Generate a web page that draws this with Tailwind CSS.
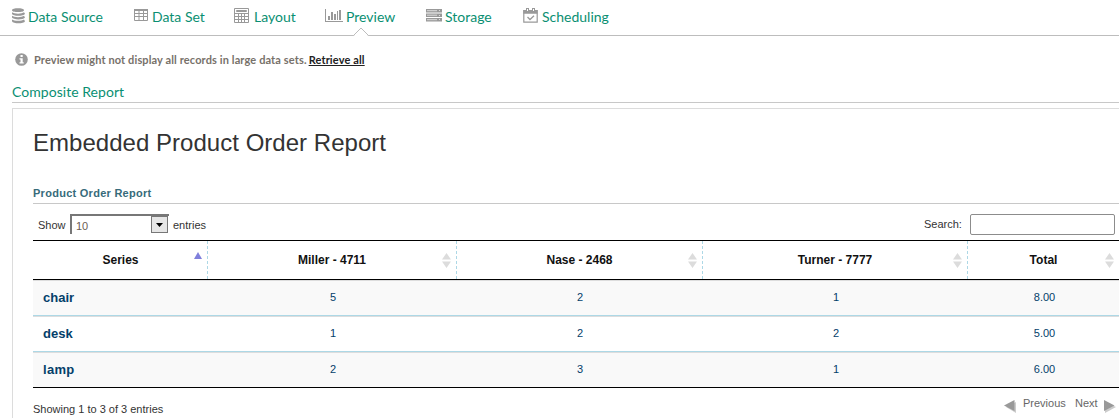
<!DOCTYPE html>
<html lang="en"><head><meta charset="utf-8"><title>Preview</title>
<script src="https://cdn.jsdelivr.net/npm/@tailwindcss/browser@4"></script></head>
<body class="w-[1119px] h-[418px] overflow-hidden bg-white font-['Liberation_Sans',sans-serif] text-[11px] text-[#333]">
<nav class="relative h-9 border-b border-[#bdbdbd] font-[Lato,sans-serif] text-[14px] leading-[18px] text-[#0a8f72] flex pt-2 pl-[11px]">
  <a class="flex w-[123px] gap-[2px]"><svg class="w-[15px] h-4" viewBox="0 0 15 16" fill="#999"><path d="M1 2.200C1 -.3 13 -.3 13 2.200S1 4.700 1 2.200ZM1 4.200c2 1.900 10 1.900 12 0l1 1.500C13 8.500 2 8.500 1 6ZM1 7.800c2 1.900 10 1.900 12 0l1 1.600C13 12 2 12 1 9.600ZM1 11.400c2 1.900 10 1.900 12 0l1 1.800C13 16 2 16 1 13.200Z"/></svg><span>Data Source</span></a>
  <a class="flex w-[100px] gap-[3px]"><svg class="w-[15px] h-4" viewBox="0 0 15 16" fill="none" stroke="#999"><path d="M.5 1.500h13v11H.5ZM.5 5.500h13M.5 8.500h13M5 2v10.500M9.500 2v10.500"/><path d="M0 2h14" stroke-width="2"/></svg><span>Data Set</span></a>
  <a class="flex w-[91px] gap-1"><svg class="w-4 h-4" viewBox="0 0 16 16" fill="none" stroke="#999"><path d="M.5.500h14v14H.5ZM.5 5.500h14M.5 8.500h14M.5 11.500h14M4.500 6v8.500M7.500 6v8.500M10.500 6v8.500"/><path d="M2.500 2.500h10v1h-10Z"/></svg><span>Layout</span></a>
  <a class="flex w-[101px] gap-[3px]"><svg class="w-[18px] h-4" viewBox="0 0 18 16" fill="#999"><path d="M0 1h1v12h17v1H0ZM3 8h2v4H3ZM6 4h2v8H6ZM9 6h2v6H9ZM12 3h1v9h-1ZM14 2h2v10h-2Z"/></svg><span>Preview</span></a>
  <a class="flex w-[97px] gap-[3px]"><svg class="w-4 h-4" viewBox="0 0 16 16"><path fill="#999" d="M0 1h16v3.500H0ZM0 5.500h16V9H0ZM0 10h16v3.500H0Z"/><path stroke="#eee" stroke-width=".8" d="M1 2.700h10M1 7.200h10M1 11.700h10"/><path fill="#ddd" d="M13 2h1v1h-1ZM13 7h1v1h-1ZM13 11h1v1h-1Z"/></svg><span>Storage</span></a>
  <a class="flex gap-1"><svg class="w-[15px] h-4" viewBox="0 0 15 16"><path fill="none" stroke="#999" stroke-width="1.200" d="M.8 2.500h13.400v11.700H.8Z"/><path fill="#999" d="M.3 2h14.200v3.700H.3ZM3 0h3v3H3ZM9 0h3v3H9Z"/><path stroke="#fff" d="M4.500 1v2M10.500 1v2"/><path fill="none" stroke="#999" stroke-width="1.300" d="m4.500 9 2.500 2.500L11 7.700"/></svg><span>Scheduling</span></a>
  <svg class="absolute left-[353px] top-[27px] w-4 h-[9px]" viewBox="0 0 16 9"><path fill="#fff" stroke="#bdbdbd" d="M.5 8.500 8 1l7.500 7.500"/><path stroke="#fff" d="M1.500 8.500h13"/></svg>
</nav>
<div class="flex h-12 pl-[15px] pt-[16px] font-[Lato,sans-serif] text-[11px] leading-[15px] font-bold">
  <svg class="w-[13px] h-[13px] mt-px mr-[6px]" viewBox="0 0 13 13"><circle cx="6.500" cy="6.500" r="6.300" fill="#999"/><path fill="#fff" d="M5.500 2h2.200v2H5.500ZM4.500 5.200h3.200v4h1v1.300H4.500V9.200h1V6.400h-1Z"/></svg>
  <span class="text-[#77716a] tracking-[0.12px]">Preview might not display all records in large data sets.</span><a class="ml-[2px] text-[#222] underline tracking-[0.13px]">Retrieve all</a>
</div>
<h2 class="ml-3 h-[19px] border-b border-[#c8c8c8] font-[Lato,sans-serif] text-[14px] leading-4 text-[#0a8f72] tracking-[0.04px]">Composite Report</h2>
<main class="ml-3 mt-[5px] h-[312px] border-l border-t border-[#dcdcdc] pl-5">
  <h1 class="h-[75px] pt-5 text-[24px] leading-7 tracking-[0.03px]">Embedded Product Order Report</h1>
  <h3 class="h-5 border-b border-[#c8c8c8] text-[11px] leading-[18px] font-bold text-[#376b7a] tracking-[0.27px]">Product Order Report</h3>
  <div class="flex h-9 justify-between pt-[9px] pr-[4px] pl-[5px]">
    <div class="flex leading-[24px]"><span class="w-8">Show</span>
      <div class="mt-px flex h-[20px] w-[99px] border-t-2 border-l-2 border-[#777] pl-1 leading-[20px] text-[#6b5c54]"><span class="grow">10</span><span class="mr-px flex h-[17px] w-[17px] items-center justify-center border border-[#777] bg-[#e6e6e6]"><svg class="h-1 w-[7px]" viewBox="0 0 7 4"><path d="M0 0h7L3.500 4Z"/></svg></span></div>
      <span class="ml-[4px]">entries</span></div>
    <div class="flex leading-[22px]"><span class="w-[46px]">Search:</span><span class="mt-px h-[21px] w-[145px] rounded-[2px] border border-[#8c8c8c] bg-white"></span></div>
  </div>
  <div class="grid grid-cols-[175px_249px_246px_265px_151px] text-center">
    <div class="col-span-5 grid grid-cols-subgrid h-10 border-y border-black text-[12px] leading-[38px] font-bold text-[#111]">
      <div class="relative border-r border-dashed border-[#add8e6] pl-px">Series<svg class="absolute right-[5px] top-[11px] h-[7px] w-2" viewBox="0 0 8 7"><path fill="#8080dc" d="M4 0 8 7H0Z"/></svg></div>
      <div class="relative border-r border-dashed border-[#add8e6]">Miller - 4711<svg class="absolute right-[5px] top-3 h-[15px] w-[9px]" viewBox="0 0 9 15"><path fill="#dcdcdc" d="M4.500 0 9 6.500H0ZM0 8.500h9L4.500 15Z"/></svg></div>
      <div class="relative border-r border-dashed border-[#add8e6]">Nase - 2468<svg class="absolute right-[5px] top-3 h-[15px] w-[9px]" viewBox="0 0 9 15"><path fill="#dcdcdc" d="M4.500 0 9 6.500H0ZM0 8.500h9L4.500 15Z"/></svg></div>
      <div class="relative border-r border-dashed border-[#add8e6]">Turner - 7777<svg class="absolute right-[5px] top-3 h-[15px] w-[9px]" viewBox="0 0 9 15"><path fill="#dcdcdc" d="M4.500 0 9 6.500H0ZM0 8.500h9L4.500 15Z"/></svg></div>
      <div class="relative">Total<svg class="absolute right-[5px] top-3 h-[15px] w-[9px]" viewBox="0 0 9 15"><path fill="#dcdcdc" d="M4.500 0 9 6.500H0ZM0 8.500h9L4.500 15Z"/></svg></div>
    </div>
    <div class="col-span-5 grid grid-cols-subgrid h-9 border-t border-t-[#ddd] border-b border-b-[#add8e6] bg-[#f9f9f9] leading-[33px] text-[#04406a]"><b class="pl-[10px] text-left text-[13px]">chair</b><span class="pl-px">5</span><span>2</span><span class="pl-px">1</span><span class="pl-[2px]">8.00</span></div>
    <div class="col-span-5 grid grid-cols-subgrid h-9 border-t border-t-[#ddd] border-b border-b-[#add8e6] bg-white leading-[33px] text-[#04406a]"><b class="pl-[10px] text-left text-[13px]">desk</b><span class="pl-px">1</span><span>2</span><span class="pl-px">2</span><span class="pl-[2px]">5.00</span></div>
    <div class="col-span-5 grid grid-cols-subgrid h-9 border-t border-t-[#ddd] border-b border-b-black bg-[#f9f9f9] leading-[33px] text-[#04406a]"><b class="pl-[10px] text-left text-[13px] tracking-[0.3px]">lamp</b><span class="pl-px">2</span><span>3</span><span class="pl-px">1</span><span class="pl-[2px]">6.00</span></div>
  </div>
  <div class="flex justify-between pr-[3px] pt-[7px]"><span class="pt-[6px] leading-4">Showing 1 to 3 of 3 entries</span>
    <div class="flex leading-4 text-[#666]"><svg class="mt-1 mr-[7px] h-[14px] w-3" viewBox="0 0 12 14"><path fill="#ccc" d="M12 3v11L2 8Z"/><path fill="#999" d="M10.500 1v11L0 6.500Z"/></svg><span class="w-[52px]">Previous</span><span class="w-[29px]">Next</span><svg class="mt-1 h-[14px] w-3" viewBox="0 0 12 14"><path fill="#ccc" d="M1 3v11l11-6Z"/><path fill="#999" d="M0 1v11l10.500-5.500Z"/></svg></div>
  </div>
</main>
</body></html>
